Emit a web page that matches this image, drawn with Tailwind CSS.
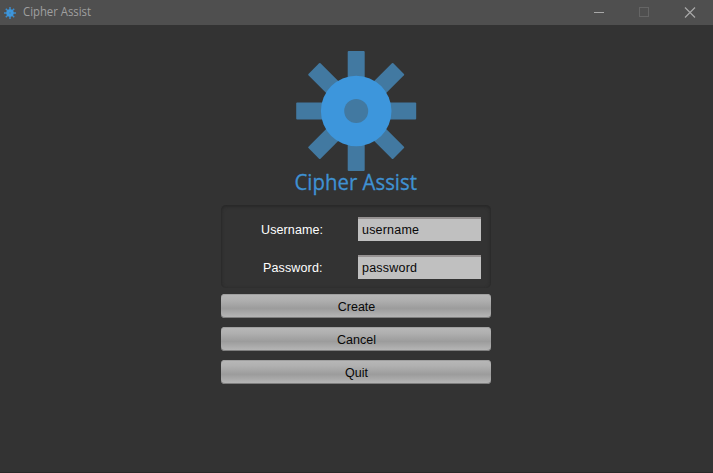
<!DOCTYPE html>
<html lang="en">
<head>
<meta charset="utf-8">
<title>Cipher Assist</title>
<script src="https://cdn.jsdelivr.net/npm/@tailwindcss/browser@4"></script>
</head>
<body class="h-[473px] w-[713px] overflow-hidden bg-[#333333] font-['Liberation_Sans',Arial,sans-serif] text-[12.5px]">
<svg class="hidden">
  <defs>
    <g id="gear">
      <g fill="#4279a1">
        <rect x="-60" y="-8.5" width="120" height="17" rx="1"/>
        <rect x="-60" y="-8.5" width="120" height="17" rx="1" transform="rotate(45)"/>
        <rect x="-60" y="-8.5" width="120" height="17" rx="1" transform="rotate(90)"/>
        <rect x="-60" y="-8.5" width="120" height="17" rx="1" transform="rotate(135)"/>
      </g>
      <circle r="35.3" fill="#3d96dc"/>
      <circle r="12" fill="#4279a1"/>
    </g>
  </defs>
</svg>
<div class="flex h-[473px] flex-col border-b border-[#292929]">
  <header class="flex h-[25px] shrink-0 items-center bg-[#4f4f4f]">
    <svg class="ml-[4px] h-[12px] w-[12px]" viewBox="-6 -6 12 12">
      <g stroke="#3c8ccb" stroke-width="1.5"><path d="M-6 0H6M0-6V6M-4.2-4.2L4.2 4.2M4.2-4.2L-4.2 4.2"/></g>
      <circle r="3.7" fill="#3d96dc"/><circle r="1.1" fill="#4786b5"/>
    </svg>
    <svg class="ml-[7px] h-[25px] w-[72px]"><text x="0" y="16" font-family="'Open Sans','Noto Sans',sans-serif" font-size="12" fill="#a0a0a0" textLength="68" lengthAdjust="spacingAndGlyphs">Cipher Assist</text></svg>
    <svg class="ml-auto mr-[17px] h-[25px] w-[104px]" fill="none" stroke-width="1">
      <path d="M2 12.5h10" stroke="#a8a8a8"/>
      <rect x="47.5" y="7.5" width="9" height="9" stroke="#656565"/>
      <path d="M93 7.5l10 10M103 7.5l-10 10" stroke="#a8a8a8" stroke-width="1.2"/>
    </svg>
  </header>
  <main class="flex flex-col items-center">
    <svg class="h-[180px] w-[143px]" viewBox="0 0 143 180">
      <use href="#gear" x="71.2" y="86"/>
      <text x="9.5" y="165" font-family="'Open Sans','Noto Sans',sans-serif" font-size="22" fill="#3f91d2" stroke="#3f91d2" stroke-width=".3" textLength="122.5" lengthAdjust="spacingAndGlyphs">Cipher Assist</text>
    </svg>
    <section class="mr-[1px] flex h-[83px] w-[270px] flex-col gap-[14px] rounded-[5px] bg-[#333333] pt-[12px] shadow-[inset_0_1px_3px_1px_#282828]">
      <div class="flex h-[24px] items-center pl-[40px]">
        <label class="w-[97px] pt-[2px] text-white"><svg class="block h-[18px] w-[66px]"><text x="0" y="13" font-size="12.5" fill="#fff" textLength="62">Username:</text></svg></label>
        <div class="h-[24px] w-[123px] border-t-2 border-[#969292] bg-[#c0c0c0] pl-[4px]"><svg class="block h-[22px] w-[66px]"><text x="0" y="15" font-size="12.5" fill="#080808" textLength="57">username</text></svg></div>
      </div>
      <div class="flex h-[24px] items-center pl-[42px]">
        <label class="w-[95px] pt-[2px] text-white"><svg class="block h-[18px] w-[66px]"><text x="0" y="13" font-size="12.5" fill="#fff" textLength="59.5">Password:</text></svg></label>
        <div class="h-[24px] w-[123px] border-t-2 border-[#969292] bg-[#c0c0c0] pl-[4px]"><svg class="block h-[22px] w-[66px]"><text x="0" y="15" font-size="12.5" fill="#080808" textLength="55">password</text></svg></div>
      </div>
    </section>
    <div class="mr-[1px] mt-[6px] flex w-[270px] flex-col gap-[9px] text-[#080808]">
      <button class="h-[24px] rounded-[4px] bg-[linear-gradient(#b8b8b8,#b0b0b0_25%,#9c9c9c_60%,#b8b8b8)] pt-[2px] pl-[1px] shadow-[inset_0_1px_0_#a0a0a0,inset_0_-1px_0_#7e7e7e]">Create</button>
      <button class="h-[24px] rounded-[4px] bg-[linear-gradient(#b8b8b8,#b0b0b0_25%,#9c9c9c_60%,#b8b8b8)] pt-[2px] pl-[1px] shadow-[inset_0_1px_0_#a0a0a0,inset_0_-1px_0_#7e7e7e]">Cancel</button>
      <button class="h-[24px] rounded-[4px] bg-[linear-gradient(#b8b8b8,#b0b0b0_25%,#9c9c9c_60%,#b8b8b8)] pt-[2px] pl-[1px] shadow-[inset_0_1px_0_#a0a0a0,inset_0_-1px_0_#7e7e7e]">Quit</button>
    </div>
  </main>
</div>
</body>
</html>
